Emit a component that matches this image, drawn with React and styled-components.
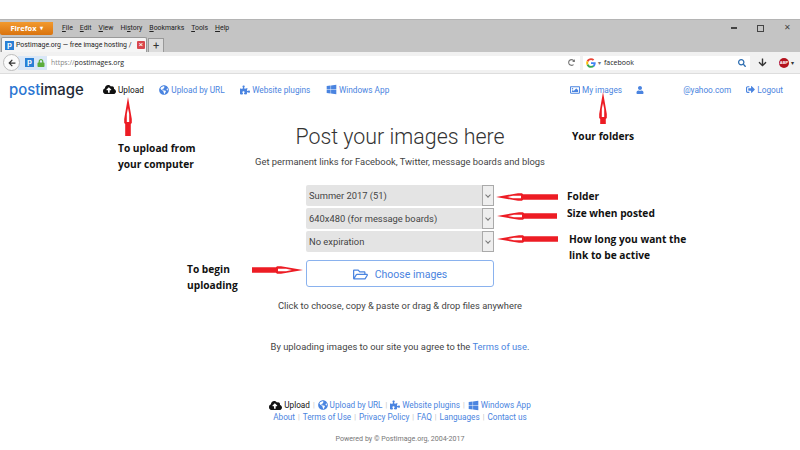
import React from "react"
import styled, { createGlobalStyle } from "styled-components"
import { FaCloudUploadAlt, FaGlobeAmericas, FaPuzzlePiece, FaWindows, FaRegImage, FaUser, FaSignOutAlt, FaRegFolderOpen, FaArrowDown, FaArrowLeft, FaSearch, FaLock, FaRedoAlt } from "react-icons/fa"

const GlobalStyle = createGlobalStyle`
  html, body { margin: 0; padding: 0; background: #fff; }
  body { width: 800px; height: 450px; overflow: hidden; font-family: Roboto, "Liberation Sans", sans-serif; }
`

const PLogo = () => (
  <LogoBox>p</LogoBox>
)

const GoogleG = () => (
  <svg width="10" height="10" viewBox="0 0 48 48">
    <path fill="#ea4335" d="M24 10c3.5 0 6.6 1.2 9 3.500l6.700-6.700C35.600 3 30.200 1 24 1 15 1 7.300 6.200 3.500 13.700l7.800 6C13.200 14 18.100 10 24 10z" />
    <path fill="#4285f4" d="M46.500 24.500c0-1.600-.1-3.100-.4-4.500H24v9h12.700c-.6 3-2.200 5.400-4.700 7.100l7.500 5.800c4.400-4 7-10 7-17.400z" />
    <path fill="#fbbc05" d="M11.300 28.300c-.5-1.400-.8-2.800-.8-4.300s.3-3 .8-4.300l-7.800-6C1.900 16.800 1 20.300 1 24s.9 7.200 2.500 10.300l7.800-6z" />
    <path fill="#34a853" d="M24 47c6.200 0 11.400-2 15.500-5.600L32 35.600c-2.100 1.400-4.800 2.300-8 2.300-5.900 0-10.800-4-12.700-9.600l-7.800 6C7.300 41.800 15 47 24 47z" />
  </svg>
)

// drawn pointing right in a length x 10 box, then turned for the other directions
const Arrow = ({ dir, length: L, top, left }) => {
  const up = dir === "up"
  const turn = {
    right: "",
    left: `translate(${L} 0) scale(-1 1)`,
    up: `rotate(-90) translate(${-L} 0)`,
  }[dir]
  return (
    <ArrowWrap $top={top} $left={left}>
      <svg width={up ? 10 : L} height={up ? L : 10}>
        <g transform={turn}>
          <path
            d={`M0 2.200H${L - 27}L${L - 26} 1.200H${L - 22}L${L} 5L${L - 22} 8.800H${L - 26}L${L - 27} 7.800H0Z`}
            fill="#ed1c24"
          />
          <path d={`M${L - 25} 3.800H${L - 17}L${L - 11} 5L${L - 17} 6.200H${L - 25}Z`} fill="#fff" />
        </g>
      </svg>
    </ArrowWrap>
  )
}

const App = () => (
  <Page>
    <GlobalStyle />
    <TopGap />
    <TitleBar>
      <MenuRow>
        <FirefoxButton>Firefox <Caret>▾</Caret></FirefoxButton>
        <Menu>
          <u>F</u>ile
        </Menu>
        <Menu>
          <u>E</u>dit
        </Menu>
        <Menu>
          <u>V</u>iew
        </Menu>
        <Menu>
          Hi<u>s</u>tory
        </Menu>
        <Menu>
          <u>B</u>ookmarks
        </Menu>
        <Menu>
          <u>T</u>ools
        </Menu>
        <Menu>
          <u>H</u>elp
        </Menu>
        <WindowButtons>
          <WinMin />
          <WinMax />
          <WinClose>✕</WinClose>
        </WindowButtons>
      </MenuRow>
      <TabRow>
        <Tab>
          <PLogo />
          <TabTitle>Postimage.org — free image hosting /</TabTitle>
          <TabClose>×</TabClose>
        </Tab>
        <NewTab>+</NewTab>
      </TabRow>
    </TitleBar>
    <NavBar>
      <BackButton>
        <FaArrowLeft />
      </BackButton>
      <UrlBar>
        <Identity>
          <PLogo />
          <FaLock color="#5cad3c" size={8} />
        </Identity>
        <UrlText>
          <span>https://</span>postimages.org
        </UrlText>
        <FaRedoAlt color="#777" size={7} />
      </UrlBar>
      <SearchBar>
        <GoogleG />
        <SearchCaret>▾</SearchCaret>
        <SearchText>facebook</SearchText>
        <FaSearch color="#2b6cb0" size={8} />
      </SearchBar>
      <ToolIcon>
        <FaArrowDown size={9} />
      </ToolIcon>
      <AdBlock>ABP</AdBlock>
      <Caret>▾</Caret>
    </NavBar>

    <SiteNav>
      <Logo>
        <b>post</b>image
      </Logo>
      <NavLink $active>
        <FaCloudUploadAlt size={13} /> Upload
      </NavLink>
      <NavLink>
        <FaGlobeAmericas size={10} /> Upload by URL
      </NavLink>
      <NavLink>
        <FaPuzzlePiece size={10} /> Website plugins
      </NavLink>
      <NavLink>
        <FaWindows size={11} /> Windows App
      </NavLink>
      <NavRight>
        <NavLink>
          <FaRegImage size={10} /> My images
        </NavLink>
        <UserLink>
          <FaUser size={8} />
        </UserLink>
        <EmailLink>@yahoo.com</EmailLink>
        <NavLink>
          <FaSignOutAlt size={9} /> Logout
        </NavLink>
      </NavRight>
    </SiteNav>

    <Main>
      <Heading>Post your images here</Heading>
      <Lead>Get permanent links for Facebook, Twitter, message boards and blogs</Lead>
      <Selects>
        <Select>
          Summer 2017 (51)
          <SelectArrow />
        </Select>
        <Select>
          640x480 (for message boards)
          <SelectArrow />
        </Select>
        <Select>
          No expiration
          <SelectArrow />
        </Select>
      </Selects>
      <ChooseButton>
        <FaRegFolderOpen size={15} />
        Choose images
      </ChooseButton>
      <Hint>Click to choose, copy &amp; paste or drag &amp; drop files anywhere</Hint>
      <Terms>
        By uploading images to our site you agree to the <TermsLink>Terms of use</TermsLink>.
      </Terms>
    </Main>

    <Footer>
      <FooterRow>
        <FooterLink $active>
          <FaCloudUploadAlt size={13} /> Upload
        </FooterLink>
        <Sep>|</Sep>
        <FooterLink>
          <FaGlobeAmericas size={10} /> Upload by URL
        </FooterLink>
        <Sep>|</Sep>
        <FooterLink>
          <FaPuzzlePiece size={10} /> Website plugins
        </FooterLink>
        <Sep>|</Sep>
        <FooterLink>
          <FaWindows size={11} /> Windows App
        </FooterLink>
      </FooterRow>
      <FooterRow>
        <FooterLink>About</FooterLink>
        <Sep>|</Sep>
        <FooterLink>Terms of Use</FooterLink>
        <Sep>|</Sep>
        <FooterLink>Privacy Policy</FooterLink>
        <Sep>|</Sep>
        <FooterLink>FAQ</FooterLink>
        <Sep>|</Sep>
        <FooterLink>Languages</FooterLink>
        <Sep>|</Sep>
        <FooterLink>Contact us</FooterLink>
      </FooterRow>
      <Powered>Powered by © Postimage.org, 2004-2017</Powered>
    </Footer>

    {/* hand drawn notes on top of the screenshot */}
    <Arrow dir="up" length={39} top={97} left={123} />
    <Arrow dir="up" length={32} top={92} left={598} />
    <Arrow dir="left" length={62} top={192} left={496} />
    <Arrow dir="left" length={60} top={211} left={497} />
    <Arrow dir="left" length={61} top={234} left={497} />
    <Arrow dir="right" length={51} top={265} left={252} />
    <Note $top={141} $left={118}>To upload from<br />your computer</Note>
    <Note $top={129} $left={572}>Your folders</Note>
    <Note $top={189} $left={567}>Folder</Note>
    <Note $top={206} $left={567}>Size when posted</Note>
    <Note $top={232} $left={569}>How long you want the<br />link to be active</Note>
    <Note $top={262} $left={187}>To begin<br />uploading</Note>
  </Page>
)

export default App

const Page = styled.div`
  position: relative;
  width: 800px;
  height: 450px;
  overflow: hidden;
  color: #333;
`

const TopGap = styled.div`
  height: 19px;
  background: #fff;
`

const TitleBar = styled.div`
  height: 33px;
  background: #c4c4c4;
  border-top: 1px solid #b4b4b4;
  box-sizing: border-box;
  font-family: Roboto, sans-serif;
`

const MenuRow = styled.div`
  display: flex;
  align-items: center;
  height: 16px;
`

const FirefoxButton = styled.div`
  width: 53px;
  height: 13px;
  margin-right: 9px;
  background: linear-gradient(#f29a2e, #d9730f);
  border-radius: 0 0 2px 2px;
  color: #fff;
  font: 700 7.500px "Open Sans", sans-serif;
  display: flex;
  align-items: center;
  justify-content: center;
  gap: 3px;
`

const Caret = styled.span`
  font-size: 6px;
  line-height: 1;
`

const Menu = styled.span`
  font-size: 6.900px;
  color: #222;
  margin-right: 7px;
`

const WindowButtons = styled.div`
  margin-left: auto;
  display: flex;
  align-items: center;
  gap: 20px;
  padding-right: 9px;
`

const WinMin = styled.div`
  width: 6px;
  height: 1.500px;
  background: #444;
`

const WinMax = styled.div`
  width: 5px;
  height: 5px;
  border: 1.500px solid #444;
`

const WinClose = styled.div`
  font-size: 8px;
  line-height: 1;
  color: #444;
`

const TabRow = styled.div`
  display: flex;
  align-items: flex-end;
  height: 16px;
  padding-left: 1px;
  gap: 1px;
`

const Tab = styled.div`
  width: 146px;
  height: 15px;
  box-sizing: border-box;
  background: #f5f5f5;
  border: 1px solid #999;
  border-bottom: none;
  border-radius: 2px 2px 0 0;
  display: flex;
  align-items: center;
  gap: 2px;
  padding: 0 1px 0 3px;
`

const TabTitle = styled.span`
  flex: 1;
  font-size: 6.900px;
  white-space: nowrap;
  color: #222;
`

const TabClose = styled.span`
  width: 8px;
  height: 8px;
  line-height: 8px;
  text-align: center;
  background: #d8474d;
  color: #fff;
  font-size: 8px;
  border-radius: 1px;
`

const NewTab = styled.div`
  width: 14px;
  height: 13px;
  background: #dcdcdc;
  border: 1px solid #999;
  border-bottom: none;
  text-align: center;
  line-height: 13px;
  font-size: 11px;
  color: #333;
`

const LogoBox = styled.span`
  width: 9px;
  height: 9px;
  flex: none;
  background: #2a7fd5;
  color: #fff;
  font: 700 8px/8px "Liberation Sans", sans-serif;
  text-align: center;
`

const NavBar = styled.div`
  height: 22px;
  box-sizing: border-box;
  background: #f1f1f1;
  border-bottom: 1px solid #ddd;
  display: flex;
  align-items: center;
  padding: 0 3px;
`

const BackButton = styled.div`
  width: 17px;
  height: 17px;
  box-sizing: border-box;
  border-radius: 50%;
  background: #fbfbfb;
  border: 1px solid #bbb;
  display: flex;
  align-items: center;
  justify-content: center;
  font-size: 8px;
  color: #333;
  flex: none;
  margin-right: -2px;
  z-index: 1;
`

const UrlBar = styled.div`
  width: 562px;
  height: 14px;
  box-sizing: border-box;
  background: #fff;
  display: flex;
  align-items: center;
  padding-right: 5px;
  font-family: "Open Sans", sans-serif;
`

const Identity = styled.div`
  height: 100%;
  width: 29px;
  padding-left: 7px;
  box-sizing: border-box;
  display: flex;
  align-items: center;
  gap: 3px;
  background: #d9e7f7;
`

const UrlText = styled.span`
  flex: 1;
  font-size: 6.900px;
  color: #222;
  padding-left: 4px;
  & > span { color: #888; }
`

const SearchBar = styled.div`
  width: 167px;
  height: 14px;
  margin-left: 3px;
  box-sizing: border-box;
  background: #fff;
  display: flex;
  align-items: center;
  padding: 0 4px 0 3px;
  font-family: "Open Sans", sans-serif;
`

const SearchCaret = styled.span`
  font-size: 6px;
  color: #777;
  margin: 0 3px 0 2px;
`

const SearchText = styled.span`
  flex: 1;
  font-size: 7px;
  color: #222;
`

const ToolIcon = styled.div`
  display: flex;
  color: #333;
  margin: 0 12px 0 8px;
`

const AdBlock = styled.div`
  width: 10px;
  height: 10px;
  border-radius: 50%;
  background: #b3121d;
  color: #fff;
  font: 700 4px/10px "Liberation Sans", sans-serif;
  text-align: center;
  margin-right: 2px;
`

const SiteNav = styled.nav`
  height: 31px;
  display: flex;
  align-items: center;
  padding: 0 17px 0 9px;
  font-size: 8.250px;
`

const Logo = styled.div`
  width: 94px;
  font: 500 14.900px "Inter", sans-serif;
  color: #1f2a37;
  & > b { font-weight: 500; color: #2a76d2; }
`

const NavLink = styled.a`
  display: inline-flex;
  align-items: center;
  gap: 2px;
  margin-right: 15.500px;
  color: ${p => (p.$active ? "#111" : "#4a84e0")};
  white-space: nowrap;
`

const NavRight = styled.div`
  margin-left: auto;
  display: flex;
  align-items: center;
  & > a:first-child { margin-right: 14px; }
  & > a:last-child { margin-right: 0; }
`

const UserLink = styled(NavLink)`
  margin-right: 39px;
`

const EmailLink = styled(NavLink)`
  margin-right: 15px;
`

const Main = styled.main`
  display: flex;
  flex-direction: column;
  align-items: center;
  padding-top: 20px;
`

const Heading = styled.h1`
  margin: 0;
  font-size: 21.400px;
  line-height: 24px;
  font-weight: 300;
  color: #333;
`

const Lead = styled.p`
  margin: 7px 0 17px;
  font-size: 9.400px;
  line-height: 12px;
  color: #444;
`

const Selects = styled.div`
  display: flex;
  flex-direction: column;
  gap: 2px;
  width: 188px;
`

const Select = styled.div`
  position: relative;
  height: 21px;
  box-sizing: border-box;
  background: #e4e4e4;
  border-radius: 2px;
  padding-left: 3px;
  display: flex;
  align-items: center;
  font-size: 9.350px;
  color: #444;
`

const SelectArrow = styled.span`
  position: absolute;
  right: 0;
  top: 0;
  bottom: 0;
  width: 10px;
  border: 1px solid #aaa;
  background: #eee;
  &::after {
    content: "";
    position: absolute;
    left: 3px;
    top: 7px;
    width: 3px;
    height: 3px;
    border: solid #777;
    border-width: 0 1px 1px 0;
    transform: rotate(45deg);
  }
`

const ChooseButton = styled.button`
  width: 188px;
  height: 27px;
  margin-top: 8px;
  padding: 1px 0 0;
  box-sizing: border-box;
  background: #fff;
  border: 1px solid #8ab2ee;
  border-radius: 3px;
  color: #4a84e0;
  font: 400 10.500px Roboto, sans-serif;
  display: flex;
  align-items: center;
  justify-content: center;
  gap: 7px;
`

const Hint = styled.p`
  margin: 13px 0 0;
  font-size: 9.350px;
  line-height: 12px;
  color: #444;
`

const Terms = styled.p`
  margin: 29px 0 0;
  font-size: 9.370px;
  line-height: 12px;
  color: #444;
`

const TermsLink = styled.a`
  color: #4a84e0;
`

const Footer = styled.footer`
  display: flex;
  flex-direction: column;
  align-items: center;
  margin-top: 46px;
  font-size: 8.200px;
`

const FooterRow = styled.div`
  display: flex;
  align-items: center;
  height: 12px;
  gap: 3px;
`

const FooterLink = styled.a`
  display: inline-flex;
  align-items: center;
  gap: 2px;
  color: ${p => (p.$active ? "#111" : "#4a84e0")};
`

const Sep = styled.span`
  color: #bbb;
  font-size: 7px;
`

const Powered = styled.div`
  margin-top: 11px;
  font-size: 7.100px;
  line-height: 10px;
  color: #777;
`

const ArrowWrap = styled.div`
  position: absolute;
  top: ${p => p.$top}px;
  left: ${p => p.$left}px;
  line-height: 0;
`

const Note = styled.div`
  position: absolute;
  top: ${p => p.$top}px;
  left: ${p => p.$left}px;
  font: 700 10.200px/15.500px "Open Sans", sans-serif;
  color: #111;
  white-space: nowrap;
`
